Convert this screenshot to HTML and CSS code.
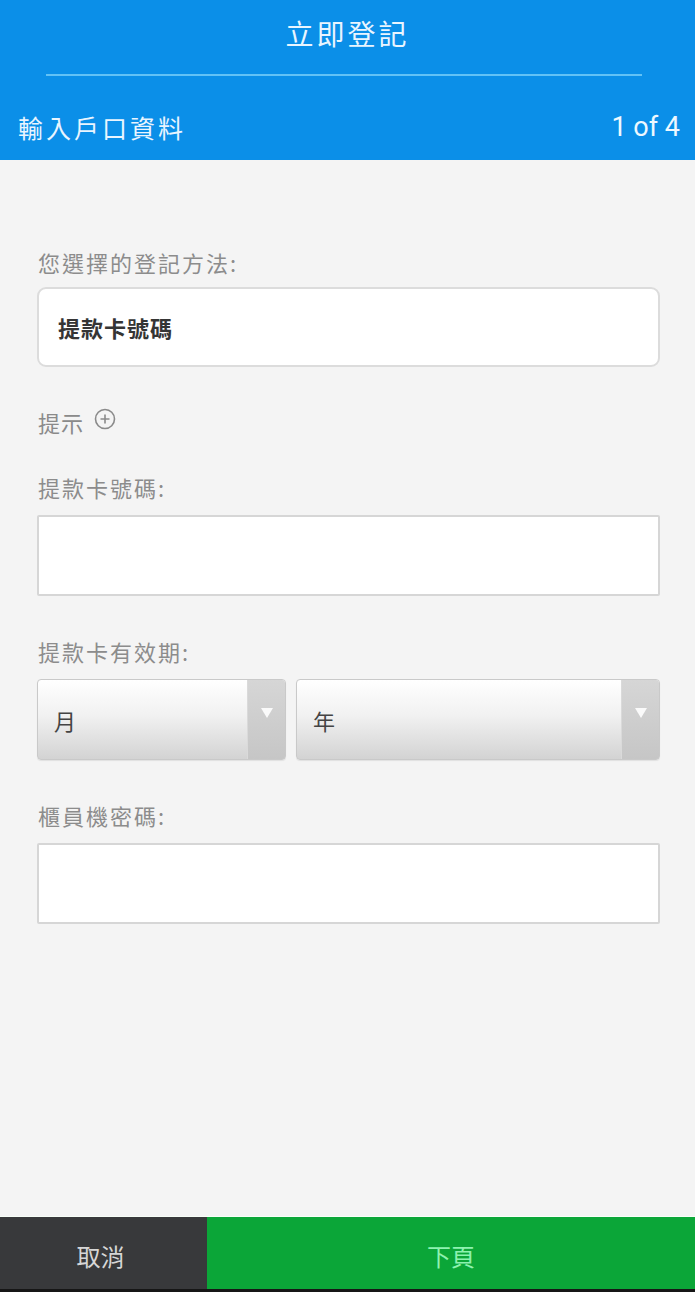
FILE: index.html
```html
<!DOCTYPE html>
<html lang="zh-Hant">
<head>
<meta charset="utf-8">
<title>立即登記</title>
<link rel="stylesheet" href="styles.css">
</head>
<body>
<div class="page">
  <header class="header">
    <div class="title">立即登記</div>
    <div class="divider"></div>
    <div class="subrow">
      <span class="subtitle">輸入戶口資料</span>
      <span class="step">1 of 4</span>
    </div>
  </header>

  <main class="content">
    <div class="label first">您選擇的登記方法:</div>
    <div class="method-box">提款卡號碼</div>

    <div class="hint">
      <span>提示</span>
      <svg class="hint-icon" width="22" height="22" viewBox="0 0 22 22">
        <circle cx="11" cy="11" r="9.5" fill="none" stroke="#8a8a8a" stroke-width="1.6"/>
        <path d="M6.5 11h9M11 6.5v9" stroke="#8a8a8a" stroke-width="1.6" fill="none"/>
      </svg>
    </div>

    <div class="field after-hint">
      <div class="label">提款卡號碼:</div>
      <div class="input"></div>
    </div>

    <div class="field">
      <div class="label">提款卡有效期:</div>
      <div class="selects">
        <div class="select">
          <span class="select-text">月</span>
          <span class="select-arrow"><span class="tri"></span></span>
        </div>
        <div class="select">
          <span class="select-text">年</span>
          <span class="select-arrow"><span class="tri"></span></span>
        </div>
      </div>
    </div>

    <div class="field">
      <div class="label">櫃員機密碼:</div>
      <div class="input"></div>
    </div>
  </main>

  <footer class="footer">
    <div class="btn cancel">取消</div>
    <div class="btn next">下頁</div>
  </footer>
</div>
</body>
</html>
```

FILE: styles.css
```css
* { box-sizing: border-box; }
html, body { margin: 0; padding: 0; }
body {
  font-family: "Noto Sans CJK TC", "Noto Sans", sans-serif;
  background: #f4f4f4;
}
.page {
  width: 695px;
  height: 1292px;
  display: flex;
  flex-direction: column;
  overflow: hidden;
}
.header {
  background: #0b8fe8;
  height: 160px;
  flex: none;
  color: #e9f5ff;
}
.title {
  height: 66px;
  line-height: 66px;
  text-align: center;
  font-size: 28px;
  letter-spacing: 3px;
}
.divider {
  margin: 8px 53px 0 46px;
  height: 2px;
  background: #62c2f6;
}
.subrow {
  height: 84px;
  padding: 18px 15px 0 18px;
  display: flex;
  align-items: center;
  justify-content: space-between;
}
.subtitle {
  font-size: 25px;
  letter-spacing: 3px;
}
.step {
  font-family: Roboto, "Liberation Sans", sans-serif;
  font-size: 27px;
  color: #eef8ff;
}
.content {
  flex: 1;
  padding: 87px 35px 0 37px;
}
.label {
  font-size: 22px;
  line-height: 30px;
  color: #8c8c8c;
  letter-spacing: 2px;
  padding-left: 1px;
  margin-bottom: 13px;
}
.label.first { margin-bottom: 10px; }
.method-box {
  height: 80px;
  background: #fff;
  border: 2px solid #dcdcdc;
  border-radius: 9px;
  display: flex;
  align-items: center;
  padding: 0 0 0 19px;
  font-size: 22px;
  font-weight: 700;
  color: #353535;
  letter-spacing: 1px;
}
.hint {
  margin-top: 40px;
  height: 30px;
  display: flex;
  align-items: center;
  gap: 10px;
  font-size: 22px;
  color: #8a8a8a;
  letter-spacing: 1px;
  padding-left: 1px;
}
.hint-icon { margin-top: -6px; }
.field { margin-top: 40px; }
.field.after-hint { margin-top: 35px; }
.input {
  height: 81px;
  background: #fff;
  border: 2px solid #d6d6d6;
  border-radius: 2px;
}
.selects {
  display: grid;
  grid-template-columns: 249px 1fr;
  gap: 10px;
}
.select {
  height: 81px;
  border: 1px solid #c9c9c9;
  border-radius: 4px;
  background: linear-gradient(#ffffff, #f1f1f1 45%, #d3d3d3);
  display: flex;
  overflow: hidden;
  box-shadow: 0 1px 1px rgba(0,0,0,0.08);
}
.select-text {
  flex: 1;
  display: flex;
  align-items: center;
  padding: 0 0 0 16px;
  font-size: 22px;
  color: #444;
}
.select-arrow {
  width: 38px;
  background: linear-gradient(#d6d6d6, #c6c6c6);
  border-left: 1px solid #dadada;
  display: flex;
  justify-content: center;
  padding-top: 28px;
}
.tri {
  width: 0;
  height: 0;
  border-left: 6px solid transparent;
  border-right: 6px solid transparent;
  border-top: 10px solid #fafafa;
}
.footer {
  flex: none;
  height: 76px;
  display: flex;
  border-top: 1px solid #f8fff8;
  border-bottom: 3px solid #161616;
}
.btn {
  display: flex;
  align-items: center;
  justify-content: center;
  font-size: 24px;
  padding-top: 4px;
}
.cancel {
  width: 207px;
  background: #38393b;
  color: #d6d6d6;
  padding-right: 6px;
}
.next {
  flex: 1;
  background: #0ba638;
  color: #8ef2b0;
}
```
